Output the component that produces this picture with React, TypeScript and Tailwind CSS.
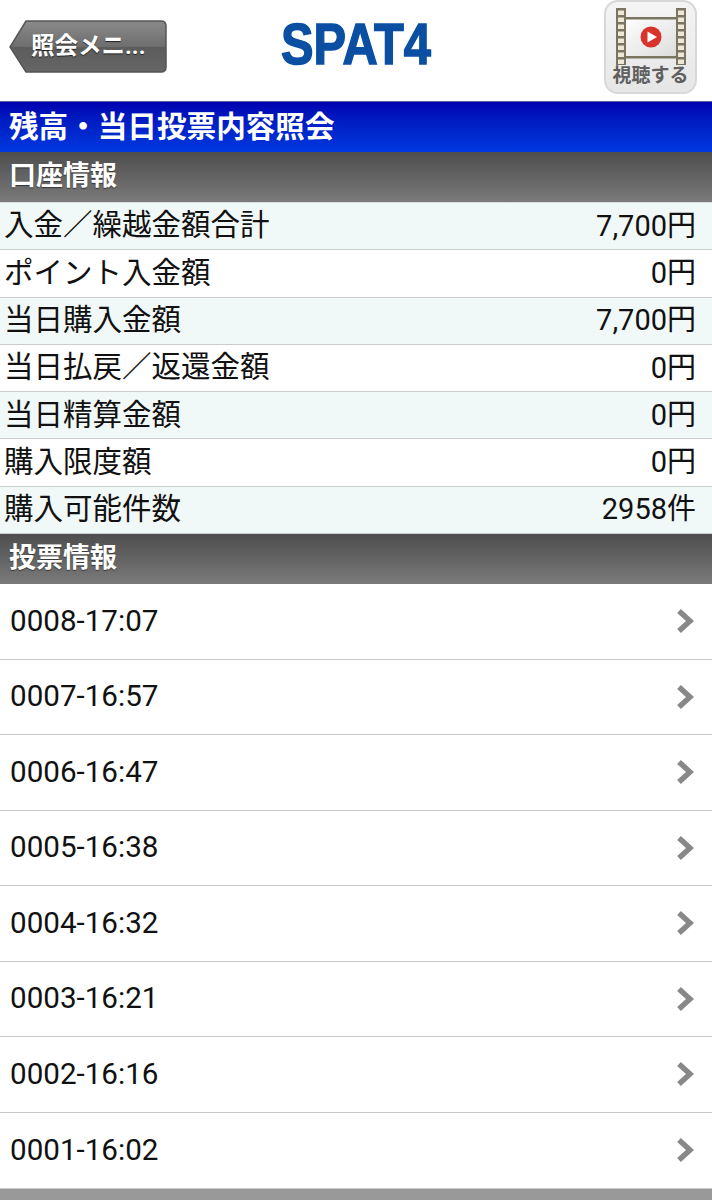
const cjk = "font-['Roboto','Noto_Sans_CJK_JP',sans-serif]";

const accountRows = [
  { label: "入金／繰越金額合計", value: "7,700円" },
  { label: "ポイント入金額", value: "0円" },
  { label: "当日購入金額", value: "7,700円" },
  { label: "当日払戻／返還金額", value: "0円" },
  { label: "当日精算金額", value: "0円" },
  { label: "購入限度額", value: "0円" },
  { label: "購入可能件数", value: "2958件" },
];

const votes = [
  "0008-17:07",
  "0007-16:57",
  "0006-16:47",
  "0005-16:38",
  "0004-16:32",
  "0003-16:21",
  "0002-16:16",
  "0001-16:02",
];

function SectionBar({ title }: { title: string }) {
  return (
    <div className="flex h-[50px] items-center bg-gradient-to-b from-[#4e4e4e] to-[#7b7b7b] pb-[2px] pl-[9px] text-[27px] leading-none font-bold text-white [text-shadow:0_1px_1px_#333]">
      {title}
    </div>
  );
}

function BackButton() {
  return (
    <div className="relative ml-[9px] mt-[20px] h-[53px] w-[158px]">
      <svg width="158" height="53" viewBox="0 0 158 53" className="absolute inset-0">
        <defs>
          <linearGradient id="backFill" x1="0" y1="0" x2="0" y2="1">
            <stop offset="0" stopColor="#8a8a8a" />
            <stop offset="0.5" stopColor="#6e6e6e" />
            <stop offset="0.52" stopColor="#5c5c5c" />
            <stop offset="1" stopColor="#666666" />
          </linearGradient>
        </defs>
        <path
          d="M17 1 H152 Q157 1 157 6 V47 Q157 52 152 52 H17 L1 27 Z"
          fill="url(#backFill)"
          stroke="#555555"
          strokeWidth="1.5"
        />
      </svg>
      <span className="absolute left-[22px] top-[11px] text-[23.5px] leading-[30px] font-bold whitespace-nowrap text-white [text-shadow:0_1px_1px_#222]">
        照会メニ...
      </span>
    </div>
  );
}

function Logo() {
  return (
    <svg width="150" height="50" viewBox="0 0 150 50" className="mt-[19px] ml-[114px] overflow-visible">
      <text
        x="0"
        y="45"
        textLength="150"
        lengthAdjust="spacingAndGlyphs"
        fontFamily="'Liberation Sans', sans-serif"
        fontWeight="700"
        fontSize="58"
        fill="#0b4fa3"
        stroke="#0b4fa3"
        strokeWidth="1.5"
      >
        SPAT4
      </text>
    </svg>
  );
}

function WatchButton() {
  const holes = [0, 1, 2, 3, 4, 5, 6, 7];
  return (
    <div className="mr-[15px] ml-auto flex h-[94px] w-[93px] flex-col items-center rounded-[14px] border-2 border-[#d8d8d8] bg-gradient-to-b from-[#f4f4f4] to-[#e6e6e6]">
      <svg width="70" height="57" viewBox="0 0 70 57" className="mt-[6px]">
        <defs>
          <linearGradient id="filmFill" x1="0" y1="0" x2="1" y2="1">
            <stop offset="0" stopColor="#ffffff" />
            <stop offset="1" stopColor="#dcdcdc" />
          </linearGradient>
        </defs>
        <rect x="8" y="10" width="54" height="39" fill="url(#filmFill)" />
        <rect x="8" y="9" width="54" height="2.5" fill="#7a7560" />
        <rect x="8" y="48" width="54" height="2.5" fill="#7a7560" />
        <rect x="0" y="0" width="10" height="57" fill="#7a7560" />
        <rect x="60" y="0" width="10" height="57" fill="#7a7560" />
        {holes.map((i) => (
          <g key={i}>
            <rect x="2" y={2.5 + i * 7} width="6" height="4.5" fill="#ece8d8" />
            <rect x="62" y={2.5 + i * 7} width="6" height="4.5" fill="#ece8d8" />
          </g>
        ))}
        <circle cx="35" cy="29" r="10.5" fill="#d8342c" />
        <path d="M31.5 23.5 L41 29 L31.5 34.5 Z" fill="#ffffff" />
      </svg>
      <span className="text-[19px] leading-[22px] font-bold whitespace-nowrap text-[#606060]">視聴する</span>
    </div>
  );
}

export default function App() {
  return (
    <div className={`${cjk} h-[1200px] overflow-hidden bg-white text-[#111111]`}>
      <header className="flex h-[101px] items-start">
        <BackButton />
        <Logo />
        <WatchButton />
      </header>

      <div className="flex h-[51px] items-center border-t border-[#5a6a9a] bg-gradient-to-b from-[#0000b0] to-[#0038e0] pt-[1px] pl-[9px] text-[29.6px] leading-none font-bold text-white">
        残高・当日投票内容照会
      </div>

      <SectionBar title="口座情報" />

      <div className="border-t border-[#dddddd]">
        {accountRows.map((row, i) => (
          <div
            key={row.label}
            className={`flex h-[47.3px] items-center justify-between border-b border-[#cccccc] pr-[16px] pl-[4px] text-[29.5px] leading-none ${
              i % 2 === 0 ? "bg-[#f1f8f8]" : "bg-white"
            }`}
          >
            <span>{row.label}</span>
            <span className="text-[29px]">{row.value}</span>
          </div>
        ))}
      </div>

      <SectionBar title="投票情報" />

      <ul>
        {votes.map((vote, i) => (
          <li
            key={vote}
            className={`flex h-[75.5px] items-center justify-between pr-[18px] pl-[10px] text-[29.6px] leading-none ${
              i < votes.length - 1 ? "border-b border-[#c8c8c8]" : ""
            }`}
          >
            <span>{vote}</span>
            <svg width="18" height="26" viewBox="0 0 18 26">
              <path d="M3 3 L14 13 L3 23" fill="none" stroke="#888888" strokeWidth="5.5" />
            </svg>
          </li>
        ))}
      </ul>

      <div className="h-[14px] border-t border-[#cccccc] bg-[#999999]" />
    </div>
  );
}
